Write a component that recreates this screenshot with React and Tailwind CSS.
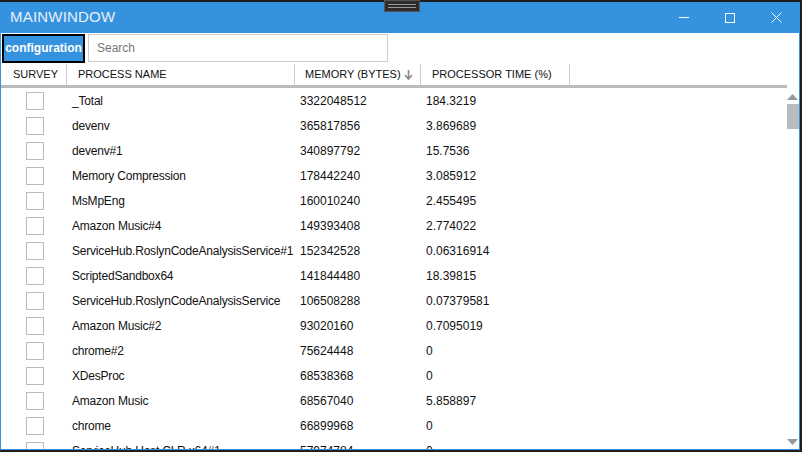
import React from 'react';

const rows = [
  ['_Total', '3322048512', '184.3219'],
  ['devenv', '365817856', '3.869689'],
  ['devenv#1', '340897792', '15.7536'],
  ['Memory Compression', '178442240', '3.085912'],
  ['MsMpEng', '160010240', '2.455495'],
  ['Amazon Music#4', '149393408', '2.774022'],
  ['ServiceHub.RoslynCodeAnalysisService#1', '152342528', '0.06316914'],
  ['ScriptedSandbox64', '141844480', '18.39815'],
  ['ServiceHub.RoslynCodeAnalysisService', '106508288', '0.07379581'],
  ['Amazon Music#2', '93020160', '0.7095019'],
  ['chrome#2', '75624448', '0'],
  ['XDesProc', '68538368', '0'],
  ['Amazon Music', '68567040', '5.858897'],
  ['chrome', '66899968', '0'],
  ['ServiceHub.Host.CLR.x64#1', '57974784', '0'],
];

const App = () => {
  return (
    <div
      className="w-[802px] h-[452px] bg-[#1e1e1e] overflow-hidden pt-[2px]"
      style={{ fontFamily: '"Liberation Sans", Arial, sans-serif' }}
    >
      <div className="relative w-[800px] h-[448px] flex flex-col border border-t-0 border-[#3592de] bg-white">
        {/* drag handle */}
        <div className="absolute left-[383px] top-[-2px] w-[36px] h-[12px] bg-[#2d2d2d] border border-[#555] flex flex-col justify-center items-center gap-[2px]">
          <div className="w-[28px] h-[1px] bg-[#999]"></div>
          <div className="w-[28px] h-[1px] bg-[#999]"></div>
        </div>

        {/* title bar */}
        <div className="h-[31px] bg-[#3592de] flex items-center pl-[9px] shrink-0">
          <span className="text-[15px] text-[#e8f0fb] tracking-[0.2px]">MAINWINDOW</span>
          <div className="ml-auto flex items-center h-full">
            <div className="w-[46px] flex justify-center">
              <div className="w-[10px] h-[1px] bg-white"></div>
            </div>
            <div className="w-[46px] flex justify-center">
              <div className="w-[10px] h-[10px] border border-white"></div>
            </div>
            <div className="w-[46px] flex justify-center">
              <svg width="11" height="11" viewBox="0 0 11 11">
                <path d="M0.5 0.5 L10.5 10.5 M10.5 0.5 L0.5 10.5" stroke="white" strokeWidth="1" />
              </svg>
            </div>
          </div>
        </div>

        {/* toolbar */}
        <div className="flex items-center h-[30px] pl-[1px] shrink-0">
          <button className="h-[29px] w-[83px] bg-[#3592de] border-2 border-black text-white font-bold text-[12px] flex items-center justify-center">
            configuration
          </button>
          <div className="ml-[3px] w-[300px] h-[28px] border border-[#cccccc] flex items-center pl-[8px]">
            <span className="text-[12px] text-[#777]">Search</span>
          </div>
        </div>

        {/* header */}
        <div className="flex h-[22px] shrink-0 text-[#111] text-[11px] items-stretch whitespace-nowrap pt-[1px]">
          <div className="w-[66px] flex items-center pl-[12px] border-r border-[#ccc]">SURVEY</div>
          <div className="w-[228px] flex items-center pl-[11px] border-r border-[#ccc]">PROCESS NAME</div>
          <div className="w-[126px] flex items-center pl-[10px] border-r border-[#ccc] gap-[3px]">
            MEMORY (BYTES)
            <svg width="9" height="10" viewBox="0 0 9 10">
              <path d="M4.5 0 V8 M1 5 L4.5 9 L8 5" stroke="#888" strokeWidth="1.6" fill="none" />
            </svg>
          </div>
          <div className="w-[149px] flex items-center pl-[11px] border-r border-[#ccc]">PROCESSOR TIME (%)</div>
        </div>
        <div className="h-[3px] w-[786px] bg-[#bbbbbb] shrink-0"></div>

        {/* body */}
        <div className="flex flex-1 overflow-hidden">
          <div className="flex-1 overflow-hidden">
            {rows.map((r, i) => (
              <div key={i} className="flex h-[25px] items-center text-[12px] text-[#111] whitespace-nowrap">
                <div className="w-[66px] pl-[25px]">
                  <div className="w-[18px] h-[18px] border border-[#bbbbbb]"></div>
                </div>
                <div className="w-[228px] pl-[5px] tracking-[-0.2px] overflow-hidden">{r[0]}</div>
                <div className="w-[126px] pl-[5px]">{r[1]}</div>
                <div className="w-[149px] pl-[5px]">{r[2]}</div>
              </div>
            ))}
          </div>
          <div className="w-[13px] flex flex-col items-center pt-[6px] pb-[4px]">
            <svg width="11" height="6" viewBox="0 0 11 6">
              <path d="M0 6 L5.5 0 L11 6 Z" fill="#999" />
            </svg>
            <div className="mt-[4px] w-[12px] h-[25px] bg-[#bbbbbb]"></div>
            <div className="flex-1"></div>
            <svg width="11" height="6" viewBox="0 0 11 6">
              <path d="M0 0 L5.5 6 L11 0 Z" fill="#999" />
            </svg>
          </div>
        </div>
      </div>
    </div>
  );
};

export default App;
